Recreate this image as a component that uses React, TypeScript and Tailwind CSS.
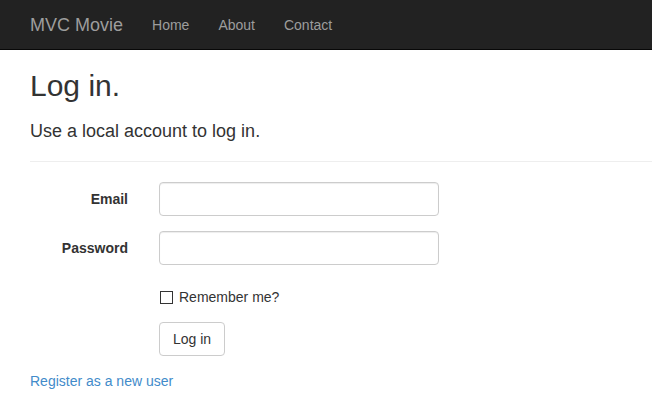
const navLinks = ["Home", "About", "Contact"];

const App = () => {
  return (
    <div className="min-h-[420px] bg-white text-[14px] leading-[20px] text-[#333] font-['Liberation_Sans',Arial,sans-serif]">
      <nav className="h-[50px] bg-[#222] border-b border-[#080808] flex items-start px-[15px]">
        <a className="pl-[15px] pr-[14.5px] py-[15px] text-[18px] leading-[20px] text-[#9d9d9d]">MVC Movie</a>
        <ul className="flex">
          {navLinks.map((link) => (
            <li key={link}>
              <a className="block px-[14.5px] py-[15px] leading-[20px] text-[#9d9d9d]">{link}</a>
            </li>
          ))}
        </ul>
      </nav>

      <main className="pl-[30px]">
        <h2 className="mt-[19px] text-[30px] leading-[33px] font-normal">Log in.</h2>
        <h4 className="mt-[19px] text-[18px] leading-[20px] font-normal">Use a local account to log in.</h4>
        <hr className="mt-[20px] mb-[20px] border-0 border-t border-[#eee]" />

        <form className="flex flex-col">
          <div className="flex items-start mb-[15px]">
            <label htmlFor="email" className="w-[98px] pt-[7px] text-right font-bold">
              Email
            </label>
            <input
              id="email"
              type="email"
              className="ml-[31px] w-[280px] h-[34px] px-3 border border-[#ccc] rounded-[4px] shadow-[inset_0_1px_1px_rgba(0,0,0,0.075)] focus:outline-none"
            />
          </div>
          <div className="flex items-start mb-[15px]">
            <label htmlFor="password" className="w-[98px] pt-[7px] text-right font-bold">
              Password
            </label>
            <input
              id="password"
              type="password"
              className="ml-[31px] w-[280px] h-[34px] px-3 border border-[#ccc] rounded-[4px] shadow-[inset_0_1px_1px_rgba(0,0,0,0.075)] focus:outline-none"
            />
          </div>
          <div className="flex items-center h-[27px] pt-[7px] mb-[15px] pl-[130px]">
            <span className="w-[13px] h-[13px] border border-[#333] bg-white"></span>
            <span className="ml-[6px]">Remember me?</span>
          </div>
          <div className="pl-[129px] mb-[15px]">
            <button
              type="button"
              className="h-[34px] px-[13px] border border-[#ccc] rounded-[4px] bg-white text-[#333] leading-[20px]"
            >
              Log in
            </button>
          </div>
        </form>

        <p>
          <a className="text-[#428bca]">Register as a new user</a>
        </p>
      </main>
    </div>
  );
};

export default App;
